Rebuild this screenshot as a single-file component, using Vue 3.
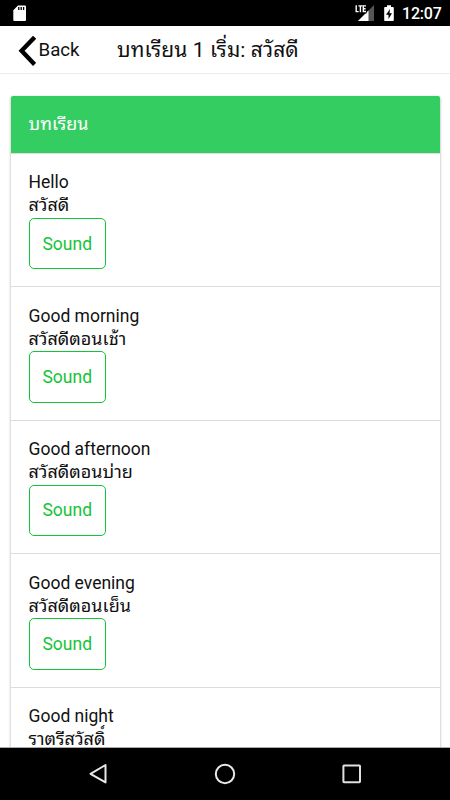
<script setup>
const lessons = [
  { en: 'Hello', th: 'สวัสดี', sound: true },
  { en: 'Good morning', th: 'สวัสดีตอนเช้า', sound: true },
  { en: 'Good afternoon', th: 'สวัสดีตอนบ่าย', sound: true },
  { en: 'Good evening', th: 'สวัสดีตอนเย็น', sound: true },
  { en: 'Good night', th: 'ราตรีสวัสดิ์', sound: false },
]
</script>

<template>
  <div class="screen">
    <div class="status">
      <svg class="sd" width="14" height="17" viewBox="0 0 14 17">
        <path d="M5 0.5H12Q13 .5 13 1.5V15Q13 16 12 16H1.3Q.3 16 .3 15V5.3Z" fill="#fff" />
        <path d="M5.8 2v3M8.2 2v3M10.6 2v3" stroke="#000" stroke-width="1.3" />
      </svg>
      <div class="tray">
        <svg class="signal" width="20" height="17" viewBox="0 0 20 17">
          <path d="M19 0V16H3Z" fill="#555" />
          <path d="M13.5 5.5V16H3Z" fill="#fff" />
          <path d="M0 0H11.5V8.5H0Z" fill="#000" />
          <path d="M1.2 .2V6.6H3.6M3.4 .9H7.4M5.4 .9V7.2M11 .9H8.3V6.5H11M8.3 3.7H10.6" fill="none" stroke="#fff" stroke-width="1.4" />
        </svg>
        <svg class="battery" width="10" height="17" viewBox="0 0 10 17">
          <path d="M3 .3H7V2H9Q9.8 2 9.8 3V15Q9.8 16 9 16H1Q.2 16 .2 15V3Q.2 2 1 2H3Z" fill="#fff" />
          <path d="M6 4L2 9.7H4.5V14L8 8.3H5.5Z" fill="#000" />
        </svg>
        <span class="clock">12:07</span>
      </div>
    </div>
    <header class="toolbar">
      <svg class="chevron" width="18" height="32" viewBox="0 0 18 32">
        <path d="M16.6 2.2L3.6 15.8L16.6 29.4" fill="none" stroke="#000" stroke-width="4.4" />
      </svg>
      <span class="back">Back</span>
      <h1 class="title">บทเรียน 1 เริ่ม: สวัสดี</h1>
    </header>
    <main class="content">
      <section class="card">
        <div class="card-head">บทเรียน</div>
        <div v-for="l in lessons" :key="l.en" class="item">
          <div class="line">{{ l.en }}</div>
          <div class="line th">{{ l.th }}</div>
          <button v-if="l.sound" class="sound">Sound</button>
        </div>
      </section>
    </main>
    <nav class="navbar">
      <svg width="20" height="22" viewBox="0 0 20 22"><path d="M17.5 2V19.4L2.5 10.8Z" fill="none" stroke="#e8e8e8" stroke-width="2" stroke-linejoin="round" /></svg>
      <svg width="22" height="22" viewBox="0 0 22 22"><circle cx="11" cy="11" r="9.2" fill="none" stroke="#e8e8e8" stroke-width="2" /></svg>
      <svg width="20" height="20" viewBox="0 0 20 20"><rect x="1.4" y="1.6" width="16.6" height="16.6" rx=".6" fill="none" stroke="#e0e0e0" stroke-width="2" /></svg>
    </nav>
  </div>
</template>

<style>
body { margin: 0; overflow: hidden; background: #fff; }
</style>
<style scoped>
.screen { width: 450px; height: 800px; display: flex; flex-direction: column; overflow: hidden; background: #fff; color: #111; font-family: Roboto, "Noto Sans Thai Looped", "Noto Looped Thai", Loma, Garuda, Waree, Umpush, "Droid Sans Thai", sans-serif; }
.status { height: 26px; flex: none; box-sizing: border-box; background: #000; display: flex; justify-content: space-between; padding: 5px 9px 0 13px; }
.tray { display: flex; }
.battery { margin-left: 9px; }
.clock { margin-left: 8px; color: #fff; font-size: 16px; font-weight: 500; line-height: 18px; width: 39px; white-space: nowrap; letter-spacing: -.2px; }
.toolbar { height: 48px; flex: none; box-sizing: border-box; display: flex; align-items: center; border-bottom: 1px solid #ededed; padding-left: 18px; }
.chevron { margin-top: 3px; }
.back { margin-left: 2.5px; width: 78.5px; font-size: 18.7px; padding-top: 1px; }
.title { margin: 0; font-size: 21px; font-weight: 400; white-space: nowrap; line-height: 30px; letter-spacing: .1px; }
.content { flex: 1; min-height: 0; overflow: hidden; padding: 22.3px 10.5px 0 11px; border-bottom: 1px solid #aaa; box-sizing: border-box; }
.card { border-radius: 2px; box-shadow: 0 1px 3px rgba(0, 0, 0, .35); background: #fff; }
.card-head { height: 57.8px; box-sizing: border-box; background: #34cd61; color: #fff; border-radius: 2px 2px 0 0; border-bottom: 1px solid #dedede; padding: 16.5px 17.5px 0; font-size: 18px; line-height: 22px; }
.item { height: 133.4px; box-sizing: border-box; border-bottom: 1px solid #dcdcdc; padding: 17.4px 17.5px 0; }
.line { height: 23px; line-height: 23px; font-size: 17.5px; white-space: nowrap; }
.th { font-size: 18px; line-height: 21px; }
.sound { display: block; box-sizing: border-box; width: 77.5px; height: 51.5px; margin: .4px 0 0; padding: 0; border: 1px solid #14c438; border-radius: 5px; background: #fff; color: #14c438; font: 17.5px Roboto, sans-serif; }
.navbar { height: 52px; flex: none; background: #000; display: flex; align-items: center; justify-content: space-between; box-sizing: border-box; padding: 0 88px 0 88px; }
</style>
